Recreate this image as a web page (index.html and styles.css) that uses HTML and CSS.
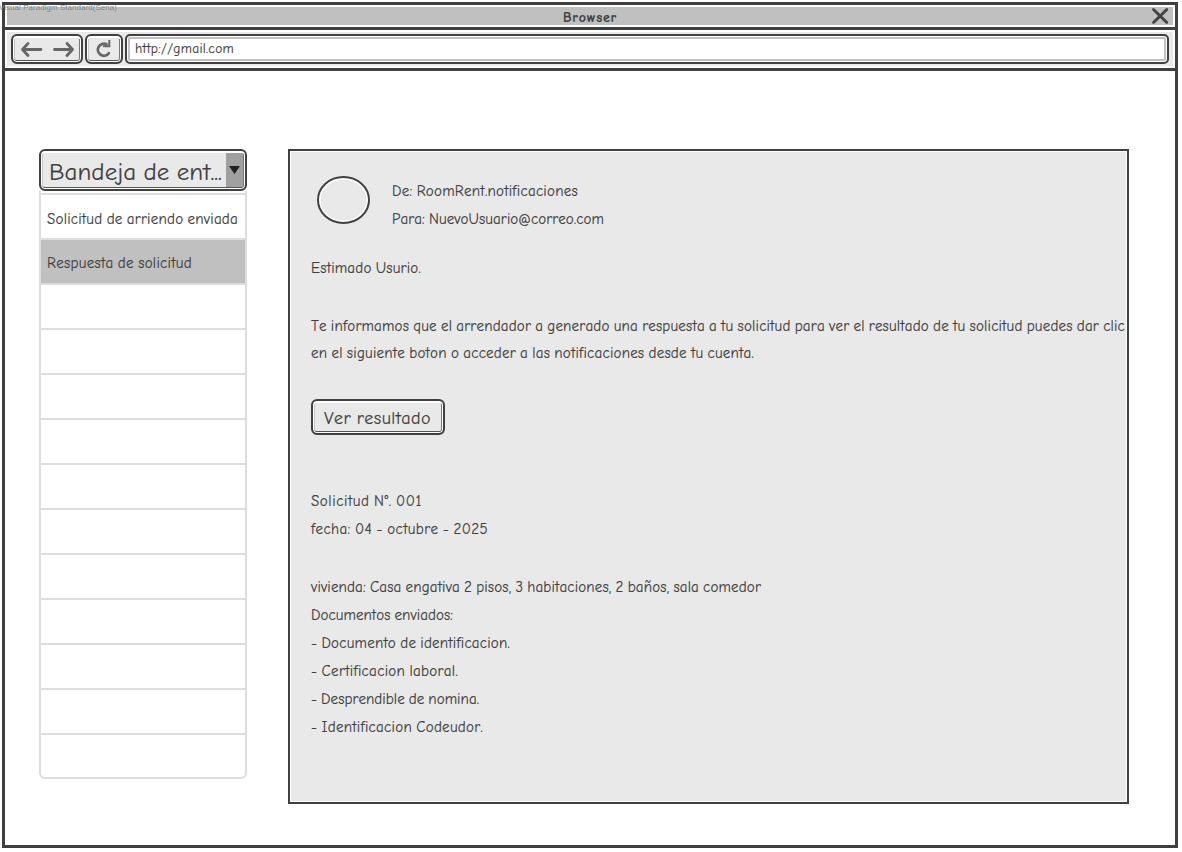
FILE: index.html
```
<!DOCTYPE html>
<html lang="es">
<head>
<meta charset="utf-8">
<title>Browser</title>
<link rel="stylesheet" href="styles.css">
</head>
<body>
<div class="watermark"><span data-width="118">Visual Paradigm Standard(Sena)</span></div>
<div class="window">
  <header class="titlebar">
    <span class="title" data-width="54">Browser</span>
    <svg class="close" width="18" height="18" viewBox="0 0 18 18"><path d="M2.500 2.500L15.800 15.400M15.800 2.500L2.500 15.400"/></svg>
  </header>
  <div class="toolbar">
    <div class="key nav">
      <svg width="68" height="26" viewBox="0 0 68 26"><path d="M28 13.500H9.500M15 7.500L9.500 13.500L15 19.500M41.500 13.500H59.500M54 7.500L59.500 13.500L54 19.500"/></svg>
    </div>
    <div class="key reload">
      <svg width="34" height="26" viewBox="0 0 34 26"><path d="M21.800 17.200A6 6 0 1 1 19.500 8.300"/><path class="tip" d="M22.300 4V10.300H16"/></svg>
    </div>
    <div class="url"><span data-width="99">http://gmail.com</span></div>
  </div>
  <main class="page">
    <aside class="folders">
      <div class="key select">
        <span class="select-text" data-width="173">Bandeja de ent...</span>
        <span class="drop"><svg width="11" height="8" viewBox="0 0 11 8"><path d="M0 0H11L5.500 8Z"/></svg></span>
      </div>
      <ul class="list">
        <li><span data-width="191">Solicitud de arriendo enviada</span></li>
        <li class="selected"><span data-width="145">Respuesta de solicitud</span></li>
        <li></li><li></li><li></li><li></li><li></li><li></li><li></li><li></li><li></li><li></li><li></li>
      </ul>
    </aside>
    <article class="mail">
      <div class="sender">
        <svg class="avatar" width="53" height="48" viewBox="0 0 53 48"><ellipse class="glow" cx="26.500" cy="24" rx="24" ry="21.500"/><ellipse class="ring" cx="26.500" cy="24" rx="25.500" ry="23"/></svg>
        <div class="addresses">
          <p><span data-width="186">De: RoomRent.notificaciones</span></p>
          <p><span data-width="212">Para: NuevoUsuario@correo.com</span></p>
        </div>
      </div>
      <p class="greeting"><span data-width="110">Estimado Usurio.</span></p>
      <div class="message">
        <p><span data-width="814">Te informamos que el arrendador a generado una respuesta a tu solicitud para ver el resultado de tu solicitud puedes dar clic</span></p>
        <p><span data-width="443">en el siguiente boton o acceder a las notificaciones desde tu cuenta.</span></p>
      </div>
      <div class="key button"><span data-width="107">Ver resultado</span></div>
      <div class="request">
        <p><span data-width="111">Solicitud N°. 001</span></p>
        <p><span data-width="177">fecha: 04 - octubre - 2025</span></p>
      </div>
      <div class="details">
        <p><span data-width="450">vivienda: Casa engativa 2 pisos, 3 habitaciones, 2 baños, sala comedor</span></p>
        <p><span data-width="142">Documentos enviados:</span></p>
        <p><span data-width="199">- Documento de identificacion.</span></p>
        <p><span data-width="147">- Certificacion laboral.</span></p>
        <p><span data-width="168">- Desprendible de nomina.</span></p>
        <p><span data-width="172">- Identificacion Codeudor.</span></p>
      </div>
    </article>
  </main>
</div>
<script src="fit.js"></script>
</body>
</html>
```
FILE: fit.js
```
// Tracks each label so that it fills its data-width.
document.querySelectorAll('[data-width]').forEach(function (el) {
  var gap = Number(el.dataset.width) - el.getBoundingClientRect().width;
  el.style.letterSpacing = gap / el.textContent.length + 'px';
});
```
FILE: styles.css
```
* { box-sizing: border-box; }
body {
  margin: 0;
  padding: 2px;
  height: 852px;
  overflow: hidden;
  background: #fff;
  color: #404040;
  font: 15px/28px "Comic Sans MS", "Comic Neue", "Noto Sans", sans-serif;
  font-kerning: none;
  -webkit-text-stroke: 0.15px #404040;
  word-spacing: -1px;
  white-space: nowrap;
}
p, ul { margin: 0; padding: 0; }
svg { display: block; }
.watermark {
  position: absolute;
  z-index: 1;
  left: -1px;
  top: 3px;
  font: 8px/10px "Liberation Sans", sans-serif;
  color: #858585;
  word-spacing: 0;
  -webkit-text-stroke: 0;
}
.window {
  width: 1176px;
  height: 846px;
  border: 3px solid #404040;
}
.titlebar {
  display: flex;
  position: relative;
  align-items: center;
  justify-content: center;
  height: 22px;
  border: 2px solid #fff;
  background: #c0c0c0;
  font-size: 14px;
  font-weight: bold;
}
.title { padding-top: 3px; }
.close { position: absolute; right: 4px; top: 0; }
.close path { fill: none; stroke: #404040; stroke-width: 2.8; stroke-linecap: round; }
.toolbar {
  display: flex;
  gap: 2px;
  height: 44px;
  padding: 2px 4px;
  border-top: 3px solid #404040;
  border-bottom: 3px solid #404040;
  background: #e9e9e9;
  box-shadow: inset 0 0 0 2px #fff;
}
.toolbar .key, .url { height: 30px; margin-top: 2px; }
.key {
  border: 2px solid #404040;
  border-radius: 6px;
  background: #e9e9e9;
  box-shadow: inset 0 0 0 1px #fff, inset 0 2px 0 #fff, inset 0 -2px 0 #555, inset 2px 0 0 #c8c8c8, inset -2px 0 0 #777;
}
.nav { margin-left: 2px; width: 72px; }
.reload { width: 38px; }
.toolbar svg path { fill: none; stroke: #666; stroke-width: 2.8; stroke-linecap: round; stroke-linejoin: round; }
.toolbar svg .tip { stroke-width: 2; stroke-linecap: butt; stroke-linejoin: miter; }
.url {
  width: 1044px;
  padding-left: 8px;
  border: 2px solid #404040;
  border-radius: 5px;
  background: #fff;
  box-shadow: inset 0 0 0 1px #fff, inset 0 0 0 3px #c0c0c0;
  font-size: 13.5px;
  line-height: 26px;
}
.page { display: flex; align-items: flex-start; gap: 41px; padding: 78px 0 0 34px; }
.folders { width: 208px; }
.select {
  position: relative;
  display: flex;
  justify-content: space-between;
  width: 208px;
  height: 42px;
  padding: 2px 2px 3px 8px;
  font-size: 25px;
  line-height: 37px;
}
.drop {
  display: flex;
  align-items: center;
  justify-content: center;
  width: 17px;
  height: 34px;
  background: #a0a0a0;
}
.drop path { fill: #202020; }
.list {
  list-style: none;
  height: 588px;
  border: 2px solid #ddd;
  border-top: 0;
  border-radius: 0 0 6px 6px;
  padding-top: 2px;
}
.list li { height: 45px; padding-left: 6px; border-top: 2px solid #ddd; line-height: 48px; }
.list li.selected { background: #c0c0c0; line-height: 46px; }
.mail {
  width: 841px;
  height: 655px;
  padding: 25px 0 0 21px;
  border: 2px solid #404040;
  background: #e9e9e9;
  box-shadow: inset 0 0 0 1px #fff;
}
.sender { display: flex; gap: 22px; padding-left: 6px; }
.addresses { padding-top: 1px; }
.avatar ellipse { fill: none; stroke-width: 2; }
.avatar .glow { stroke: #fff; }
.avatar .ring { stroke: #404040; }
.greeting { margin-top: 21px; }
.message { margin-top: 31px; line-height: 27px; }
.button {
  width: 134px;
  height: 36px;
  margin-top: 32px;
  padding-left: 11px;
  font-size: 18px;
  line-height: 35px;
}
.request { margin-top: 52px; }
.details { margin-top: 30px; }
```
